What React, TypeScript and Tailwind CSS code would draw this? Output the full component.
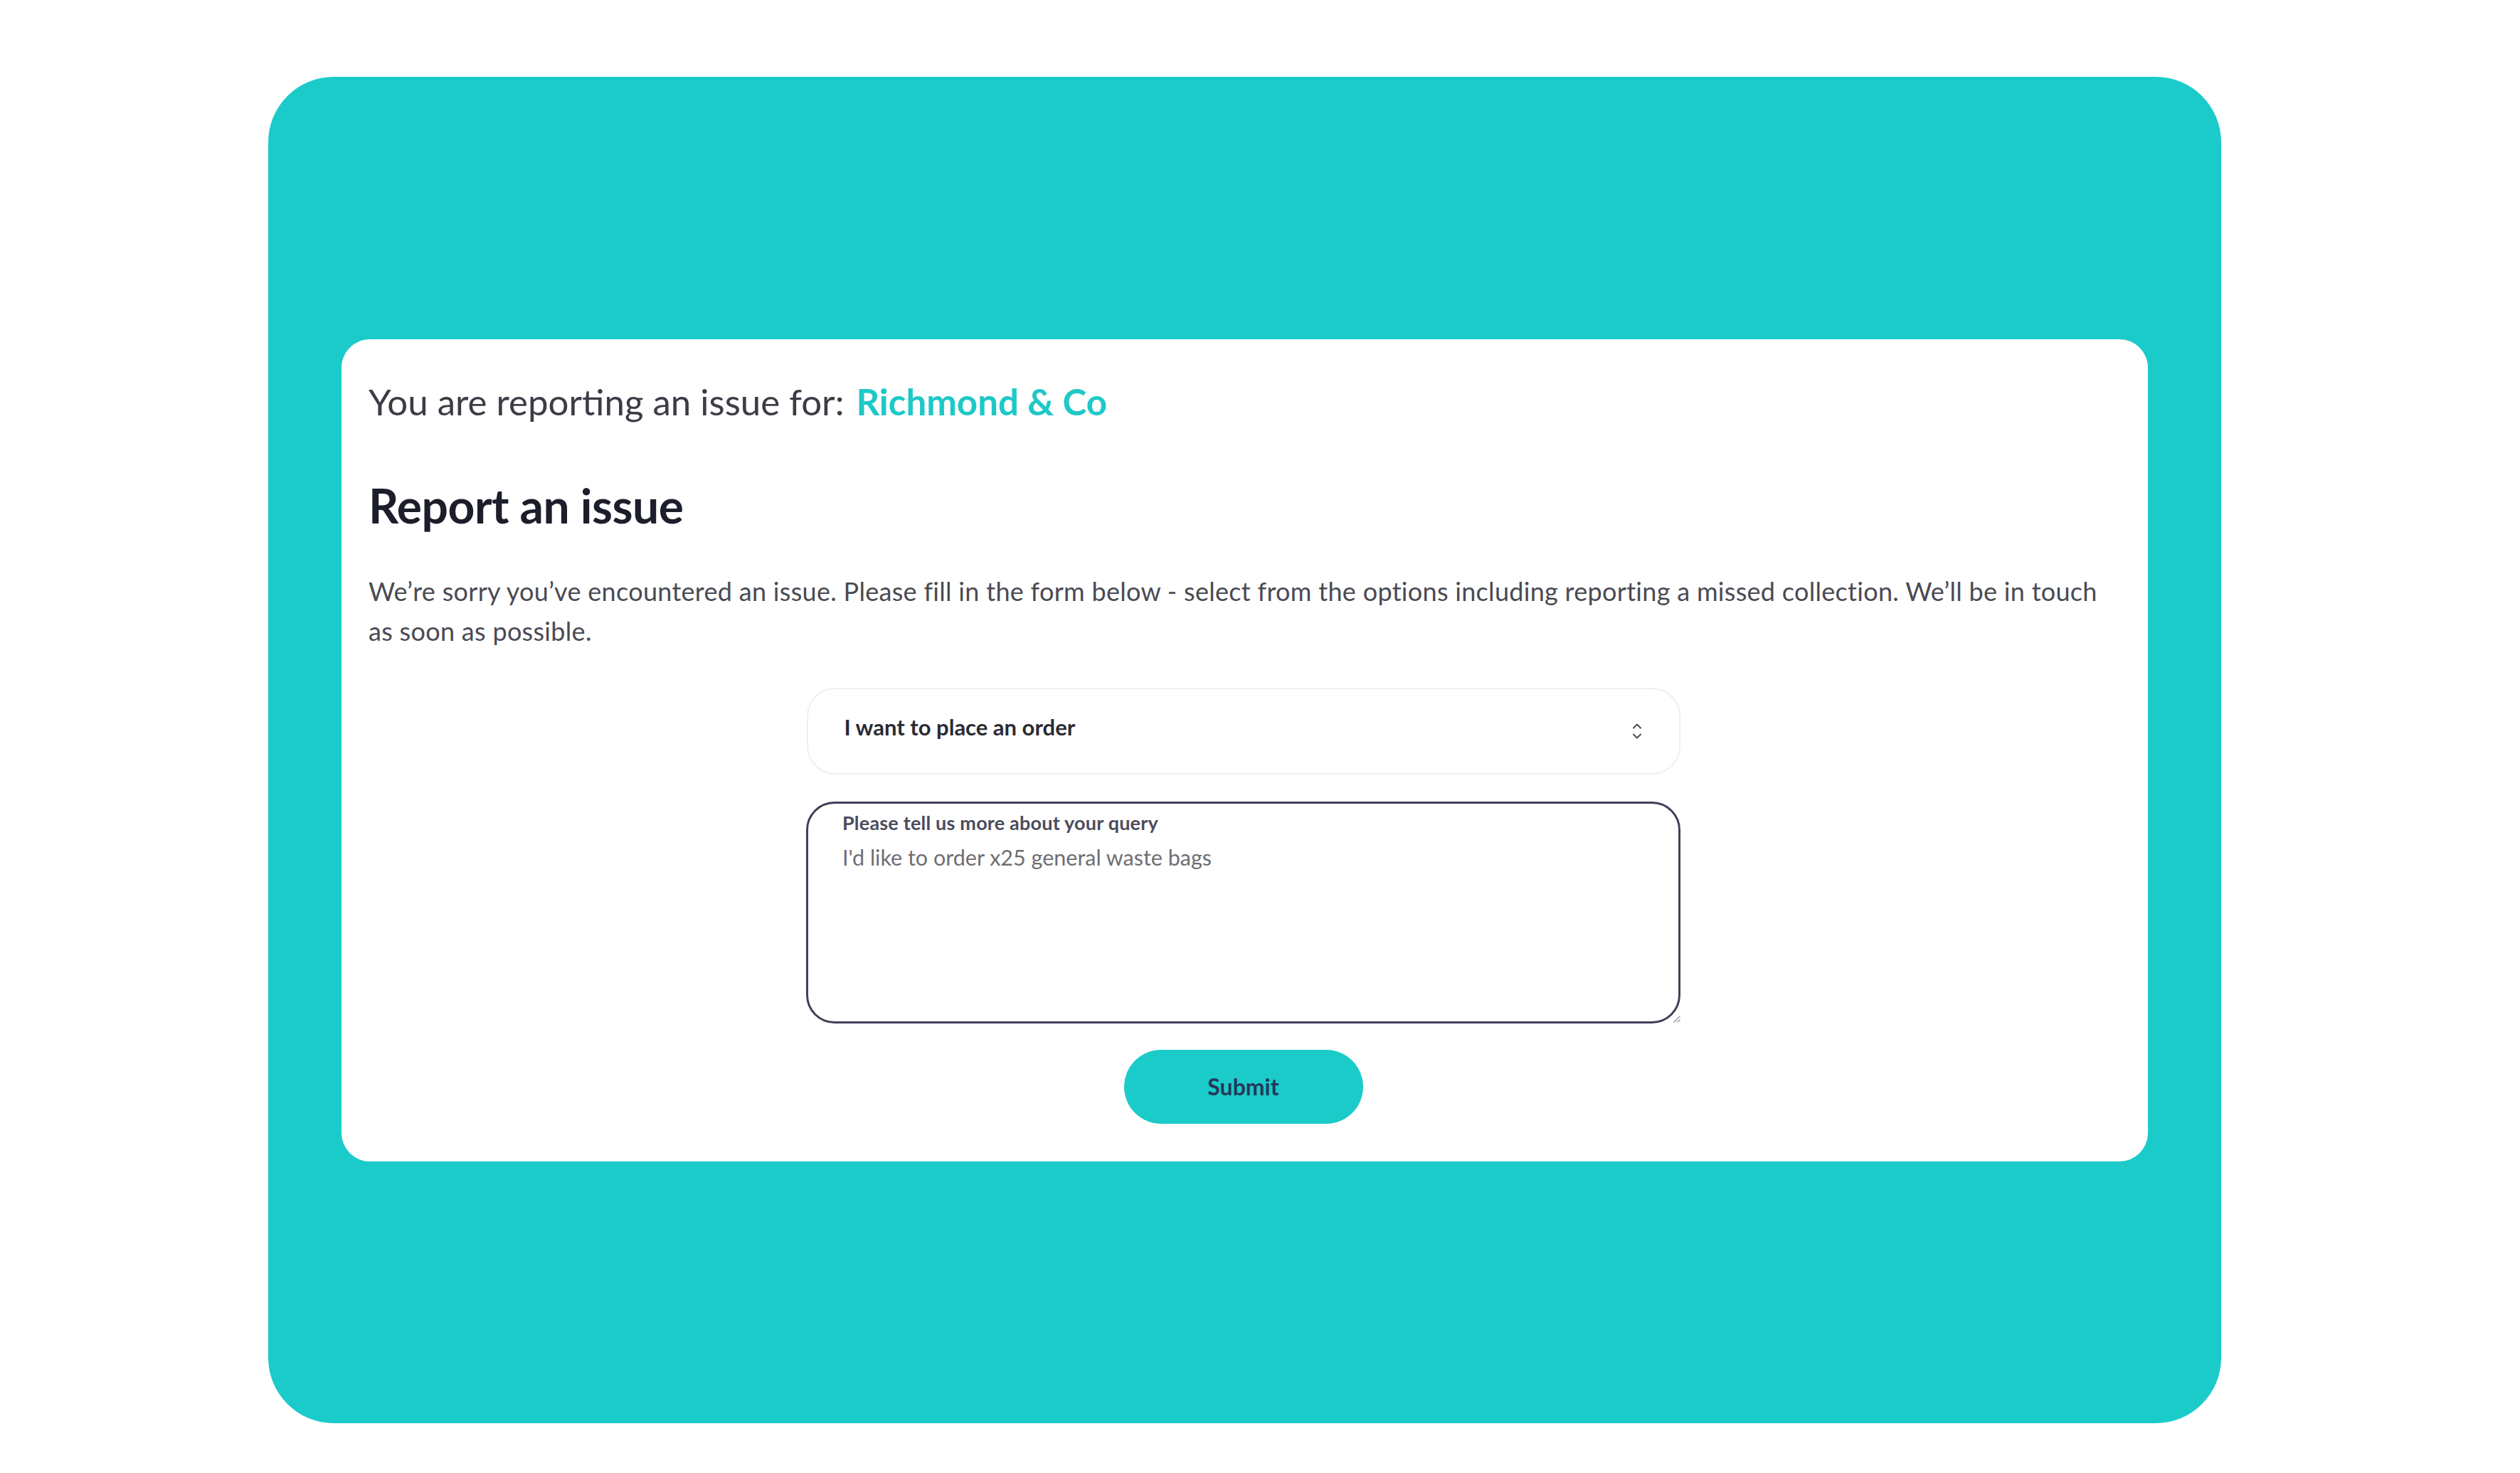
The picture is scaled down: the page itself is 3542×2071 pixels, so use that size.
import { useState } from 'react';

function UpDown() {
  return (
    <svg width="14" height="24" viewBox="0 0 14 24" fill="none" stroke="#4a4b57" strokeWidth="2" strokeLinecap="round" strokeLinejoin="round">
      <path d="M2 7.5 7 2.5l5 5" />
      <path d="M2 16.5 7 21.5l5-5" />
    </svg>
  );
}

function ResizeHandle() {
  return (
    <svg width="14" height="14" viewBox="0 0 14 14" fill="none" stroke="#9a9aa2" strokeWidth="1.5" strokeLinecap="round">
      <path d="M12 4 4 12" />
      <path d="M12 9 9 12" />
    </svg>
  );
}

export default function App() {
  const [query, setQuery] = useState("I'd like to order x25 general waste bags");

  return (
    <div className="w-[3542px] h-[2071px] bg-white pl-[377px] pt-[108px] [font-family:Lato,'Noto_Sans',sans-serif]">
      <div className="w-[2745px] h-[1893px] rounded-[92px] bg-[#1bcbca] flex items-center justify-center">
        <div className="w-[2539px] h-[1156px] rounded-[40px] bg-white pl-[38px] pr-[42px] pt-[58px] flex flex-col">
          <div className="flex items-baseline text-[51px] leading-[60px]">
            <span className="text-[#3b3c45]">You are reporting an issue for:</span>
            <span className="ml-[17px] font-bold text-[#1ec8c7]">Richmond &amp; Co</span>
          </div>

          <h1 className="mt-[76px] text-[66px] leading-[80px] font-bold text-[#1c1e2b] tracking-[-0.5px]">
            Report an issue
          </h1>

          <p className="mt-[52px] text-[36px] leading-[56px] tracking-[0.3px] text-[#4a4a53] whitespace-nowrap">
            We’re sorry you’ve encountered an issue. Please fill in the form below - select from the options including reporting a missed collection. We’ll be in touch
            <br />
            as soon as possible.
          </p>

          <div className="mt-[52px] flex flex-col items-center">
            <div className="w-[1228px] h-[122px] rounded-[40px] border-2 border-[#efefef] flex items-start justify-between pl-[51px] pr-[52px] pt-[33px]">
              <span className="text-[31px] leading-[40px] font-bold text-[#2a2b33]">I want to place an order</span>
              <span className="mt-[14px]">
                <UpDown />
              </span>
            </div>

            <div className="relative mt-[38px] w-[1229px] h-[312px] rounded-[40px] border-[3px] border-[#3f4157] flex flex-col pl-[48px] pr-[40px] pt-[11px]">
              <label className="text-[27px] leading-[32px] font-bold tracking-[0.2px] text-[#4b4c5c]">
                Please tell us more about your query
              </label>
              <textarea
                value={query}
                onChange={(e) => setQuery(e.target.value)}
                className="mt-[14px] flex-1 resize-none outline-none bg-transparent text-[30.5px] leading-[36px] text-[#6e6e74] [font-family:Lato,'Noto_Sans',sans-serif]"
              />
              <span className="absolute -right-[4px] -bottom-[3px]">
                <ResizeHandle />
              </span>
            </div>

            <button className="mt-[37px] w-[336px] h-[104px] rounded-full bg-[#1bcbca] text-[32px] font-bold text-[#25385a]">
              Submit
            </button>
          </div>
        </div>
      </div>
    </div>
  );
}
